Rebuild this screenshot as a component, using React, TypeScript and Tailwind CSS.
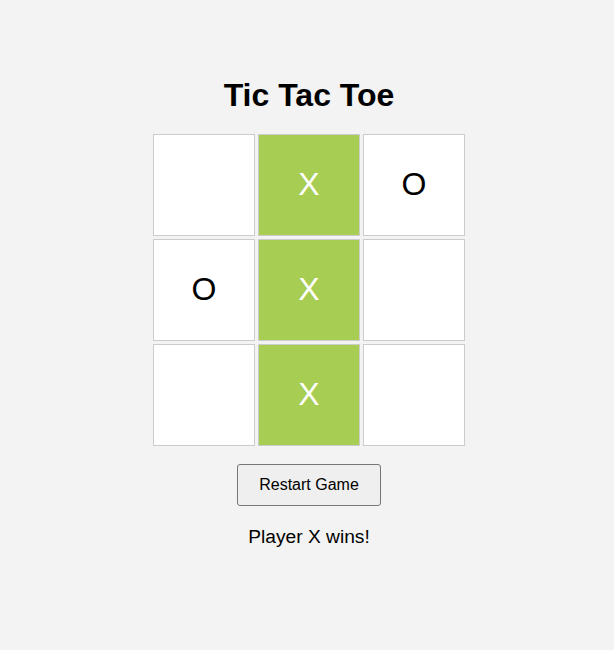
import { useState } from "react";

type Cell = "X" | "O" | null;

const lines = [
  [0, 1, 2], [3, 4, 5], [6, 7, 8],
  [0, 3, 6], [1, 4, 7], [2, 5, 8],
  [0, 4, 8], [2, 4, 6],
];

function findWinner(board: Cell[]) {
  for (const l of lines) {
    const [a, b, c] = l;
    if (board[a] && board[a] === board[b] && board[a] === board[c]) return { player: board[a], line: l };
  }
  return null;
}

const start: Cell[] = [null, "X", "O", "O", "X", null, null, "X", null];

export default function App() {
  const [board, setBoard] = useState<Cell[]>(start);
  const [turn, setTurn] = useState<"X" | "O">("X");
  const win = findWinner(board);

  const play = (i: number) => {
    if (board[i] || win) return;
    const next = board.slice();
    next[i] = turn;
    setBoard(next);
    setTurn(turn === "X" ? "O" : "X");
  };

  return (
    <div className="min-h-[650px] bg-[#f3f3f3] pl-[4px] pt-[77px] text-center text-black" style={{ fontFamily: '"Liberation Sans", Arial, sans-serif' }}>
      <h1 className="mb-[20px] text-[32px] font-bold leading-[37px]">Tic Tac Toe</h1>

      <div className="mx-auto grid w-[312px] grid-cols-3 gap-[3px]">
        {board.map((c, i) => {
          const hit = win?.line.includes(i);
          return (
            <button
              key={i}
              onClick={() => play(i)}
              className={`flex h-[102px] w-[102px] items-center justify-center border border-[#cccccc] pb-[3px] text-[32px] ${
                hit ? "bg-[#a7cd52] text-white" : "bg-white text-black"
              }`}
            >
              {c}
            </button>
          );
        })}
      </div>

      <button
        onClick={() => {
          setBoard(Array(9).fill(null));
          setTurn("X");
        }}
        className="mx-auto mt-[18px] block h-[42px] w-[144px] rounded-[3px] border border-[#767676] bg-[#efefef] text-[16px] text-black"
      >
        Restart Game
      </button>

      <div className="mt-[20px] text-[19.2px] leading-[22px]">
        {win ? `Player ${win.player} wins!` : board.every(Boolean) ? "It's a draw!" : `Player ${turn}'s turn`}
      </div>
    </div>
  );
}
